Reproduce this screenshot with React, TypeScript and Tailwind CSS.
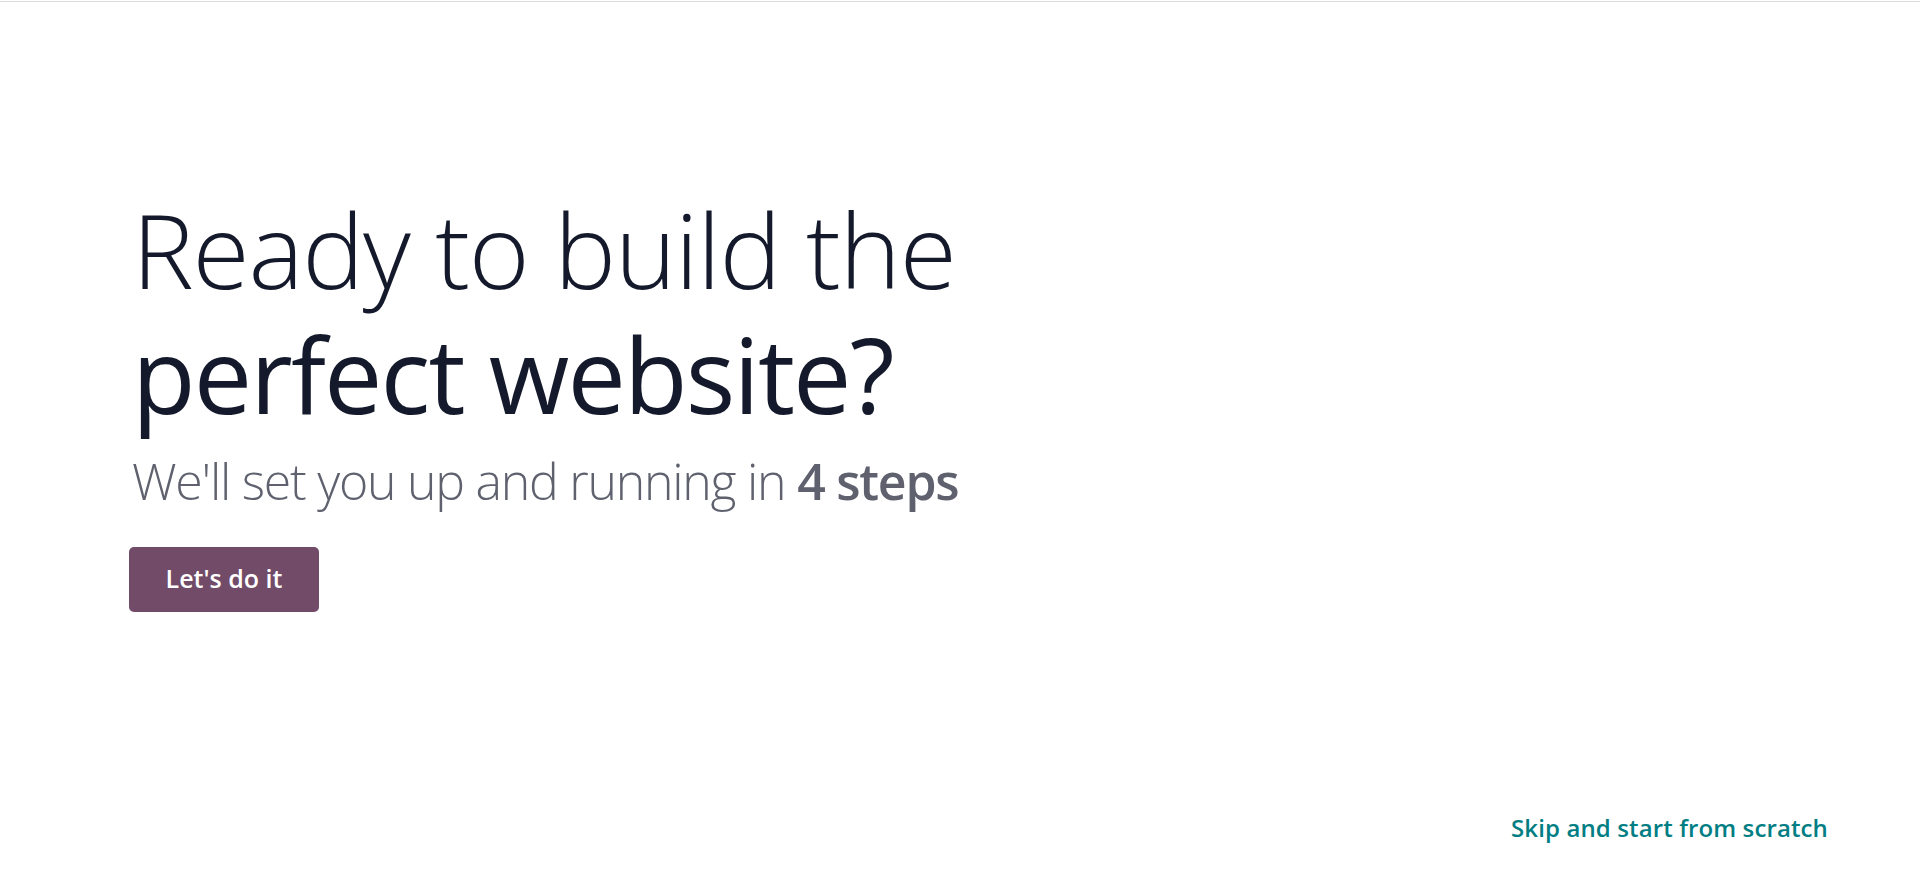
export default function App() {
  return (
    <div className="relative flex h-[870px] w-full flex-col bg-white font-['Open_Sans',sans-serif]">
      <div className="mt-px h-px w-full bg-[#dcdcdc]" />

      <section className="pl-[132px] pt-[185px]">
        <h1 className="text-[104px] leading-[1.2] text-[#141a2b]">
          <span className="block font-light tracking-[-0.012em]">Ready to build the</span>
          <span className="block font-normal tracking-[-0.018em]">perfect website?</span>
        </h1>
        <p className="mt-[14px] text-[50px] leading-[1.2] font-light tracking-[-0.025em] text-[#5f626e]">
          We'll set you up and running in <span className="font-semibold">4 steps</span>
        </p>
        <button
          type="button"
          className="mt-[36px] -ml-[3px] flex h-[65px] w-[190px] items-center justify-center rounded-[5px] bg-[#714b67] text-[25px] font-semibold text-white"
        >
          Let's do it
        </button>
      </section>

      <div className="mt-auto flex justify-end pb-[24px] pr-[92px]">
        <a href="#" className="text-[24px] font-semibold tracking-[0.005em] text-[#017e84]">
          Skip and start from scratch
        </a>
      </div>
    </div>
  );
}
